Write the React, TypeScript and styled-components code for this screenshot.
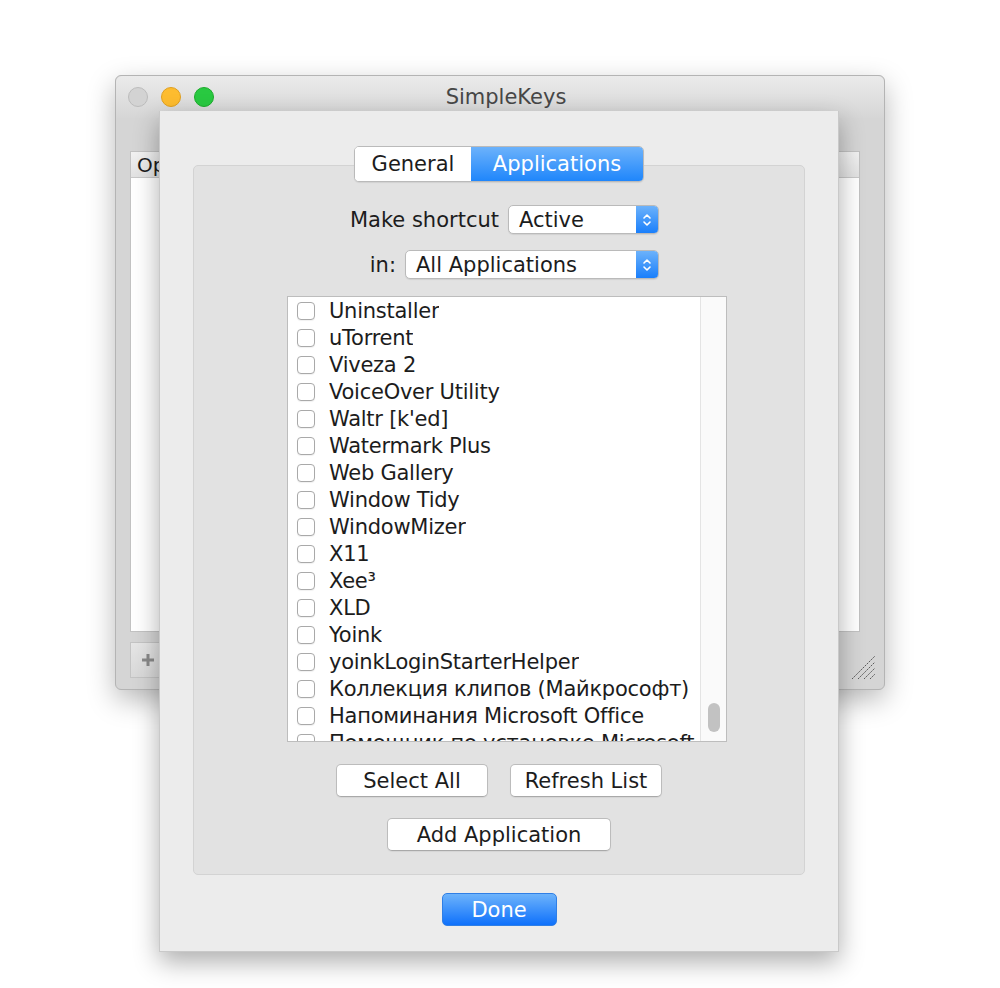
import styled, { createGlobalStyle } from "styled-components";

const GlobalStyle = createGlobalStyle`
  * { box-sizing: border-box; }
  html, body {
    margin: 0;
    background: #ffffff;
    font-family: "DejaVu Sans", "Liberation Sans", sans-serif;
    color: #1c1c1c;
  }
`;

const apps = [
  "Uninstaller",
  "uTorrent",
  "Viveza 2",
  "VoiceOver Utility",
  "Waltr [k'ed]",
  "Watermark Plus",
  "Web Gallery",
  "Window Tidy",
  "WindowMizer",
  "X11",
  "Xee³",
  "XLD",
  "Yoink",
  "yoinkLoginStarterHelper",
  "Коллекция клипов (Майкрософт)",
  "Напоминания Microsoft Office",
  "Помощник по установке Microsoft Office",
];

const Desktop = styled.div`
  height: 988px;
  padding: 75px 0 0 115px;
`;

const Window = styled.div`
  position: relative;
  width: 770px;
  height: 615px;
  background: #d5d5d5;
  border: 1px solid #b4b4b4;
  border-radius: 6px;
  box-shadow: 0 10px 28px rgba(0, 0, 0, 0.28);
`;

const TitleBar = styled.div`
  height: 42px;
  display: grid;
  grid-template-columns: 1fr auto 1fr;
  align-items: center;
  padding-left: 12px;
  border-radius: 6px 6px 0 0;
  background: linear-gradient(#ebebeb, #d6d6d6);
`;

const Lights = styled.div`
  display: flex;
  gap: 13px;
`;

const Light = styled.span<{ $fill: string; $edge: string }>`
  width: 20px;
  height: 20px;
  border-radius: 50%;
  background: ${(p) => p.$fill};
  border: 1px solid ${(p) => p.$edge};
`;

const Title = styled.div`
  font-size: 21px;
  color: #474747;
`;

const WindowBody = styled.div`
  padding: 33px 24px 0 14px;
`;

const Table = styled.div`
  height: 481px;
  background: #ffffff;
  border: 1px solid #c2c2c2;
`;

const TableHead = styled.div`
  height: 26px;
  padding-left: 6px;
  display: flex;
  align-items: center;
  font-size: 20px;
  background: linear-gradient(#f2f2f2, #e2e2e2);
  border-bottom: 1px solid #c8c8c8;
`;

const WindowFooter = styled.div`
  display: flex;
  justify-content: space-between;
  align-items: flex-end;
  padding-top: 10px;
`;

const PlusButton = styled.div`
  width: 35px;
  height: 36px;
  display: flex;
  align-items: center;
  justify-content: center;
  background: linear-gradient(#e6e6e6, #d9d9d9);
  border: 1px solid #c4c4c4;
`;

const Grip = styled.svg`
  margin: 0 -16px -2px 0;
`;

const Sheet = styled.div`
  position: absolute;
  left: 43px;
  top: 35px;
  width: 680px;
  height: 841px;
  display: flex;
  flex-direction: column;
  padding: 35px 33px 0;
  background: #ececec;
  border: 1px solid #c9c9c9;
  border-top: none;
  box-shadow: 0 10px 24px rgba(0, 0, 0, 0.32);
`;

const Segmented = styled.div`
  position: relative;
  z-index: 1;
  align-self: center;
  display: flex;
  height: 36px;
  margin-bottom: -17px;
  border: 1px solid #bababa;
  border-radius: 5px;
  overflow: hidden;
  background: #ffffff;
  box-shadow: 0 1px 1px rgba(0, 0, 0, 0.08);
`;

const Segment = styled.div<{ $width: number; $active?: boolean }>`
  width: ${(p) => p.$width}px;
  display: flex;
  align-items: center;
  justify-content: center;
  font-size: 21px;
  color: ${(p) => (p.$active ? "#ffffff" : "#1c1c1c")};
  background: ${(p) =>
    p.$active ? "linear-gradient(#6cb2fb, #1f86fb)" : "#ffffff"};
`;

const TabBox = styled.div`
  height: 710px;
  display: flex;
  flex-direction: column;
  padding-top: 39px;
  background: #e2e2e2;
  border: 1px solid #d3d3d3;
  border-radius: 5px;
`;

const Form = styled.div`
  display: flex;
  flex-direction: column;
  align-items: flex-end;
  gap: 16px;
  padding-right: 145px;
`;

const FieldRow = styled.div`
  display: flex;
  align-items: center;
  gap: 9px;
`;

const Label = styled.span`
  font-size: 21px;
`;

const Popup = styled.div<{ $width: number }>`
  width: ${(p) => p.$width}px;
  height: 29px;
  display: flex;
  border: 1px solid #bababa;
  border-radius: 5px;
  overflow: hidden;
  background: #ffffff;
  box-shadow: 0 1px 1px rgba(0, 0, 0, 0.08);
`;

const PopupValue = styled.span`
  flex: 1;
  display: flex;
  align-items: center;
  padding-left: 10px;
  font-size: 21px;
`;

const PopupCap = styled.span`
  width: 22px;
  display: flex;
  align-items: center;
  justify-content: center;
  background: linear-gradient(#6cb2fb, #1a7ffb);
`;

const List = styled.div`
  display: flex;
  width: 440px;
  height: 446px;
  margin: 17px 0 0 93px;
  background: #ffffff;
  border: 1px solid #bdbdbd;
`;

const Rows = styled.div`
  flex: 1;
  overflow: hidden;
  padding: 0 3px 0 9px;
`;

const Row = styled.div`
  height: 27px;
  display: flex;
  align-items: center;
  gap: 14px;
`;

const Check = styled.span`
  flex: none;
  width: 18px;
  height: 18px;
  border: 1px solid #a9a9a9;
  border-radius: 4px;
  background: #ffffff;
  box-shadow: 0 1px 1px rgba(0, 0, 0, 0.06);
`;

const RowText = styled.span`
  font-size: 21px;
  letter-spacing: -0.25px;
  white-space: nowrap;
  overflow: hidden;
`;

const Track = styled.div`
  width: 26px;
  display: flex;
  flex-direction: column;
  justify-content: flex-end;
  align-items: center;
  padding-bottom: 9px;
  background: #fafafa;
  border-left: 1px solid #e4e4e4;
`;

const Thumb = styled.div`
  width: 12px;
  height: 29px;
  border-radius: 6px;
  background: #c2c2c2;
`;

const ButtonRow = styled.div<{ $top: number }>`
  display: flex;
  justify-content: center;
  gap: 22px;
  margin-top: ${(p) => p.$top}px;
`;

const PushButton = styled.div<{ $width: number }>`
  width: ${(p) => p.$width}px;
  height: 33px;
  display: flex;
  align-items: center;
  justify-content: center;
  font-size: 21px;
  background: #ffffff;
  border: 1px solid #bcbcbc;
  border-bottom-color: #a9a9a9;
  border-radius: 5px;
  box-shadow: 0 1px 1px rgba(0, 0, 0, 0.06);
`;

const DoneButton = styled.div`
  align-self: center;
  width: 115px;
  height: 33px;
  margin-top: 18px;
  display: flex;
  align-items: center;
  justify-content: center;
  font-size: 21px;
  color: #ffffff;
  background: linear-gradient(#6db3fb, #0f71fb);
  border: 1px solid #2f7fe6;
  border-radius: 5px;
`;

function Chevrons() {
  return (
    <svg width="10" height="16" viewBox="0 0 10 16">
      <path
        d="M2 6 L5 3 L8 6 M2 10 L5 13 L8 10"
        fill="none"
        stroke="#ffffff"
        strokeWidth="1.6"
        strokeLinecap="round"
        strokeLinejoin="round"
      />
    </svg>
  );
}

export default function App() {
  return (
    <>
      <GlobalStyle />
      <Desktop>
        <Window>
          <TitleBar>
            <Lights>
              <Light $fill="#d3d3d3" $edge="#bcbcbc" />
              <Light $fill="#fdbc2f" $edge="#e0a020" />
              <Light $fill="#29c941" $edge="#1cac2b" />
            </Lights>
            <Title>SimpleKeys</Title>
          </TitleBar>
          <WindowBody>
            <Table>
              <TableHead>Options</TableHead>
            </Table>
            <WindowFooter>
              <PlusButton>
                <svg width="16" height="16" viewBox="0 0 16 16">
                  <path d="M8 2 V14 M2 8 H14" stroke="#8a8a8a" strokeWidth="3" />
                </svg>
              </PlusButton>
              <Grip width="28" height="26" viewBox="0 0 28 26">
                {[0, 6, 12, 18].map((o) => (
                  <path
                    key={o}
                    d={`M${4 + o} 25 L${27} ${2 + o}`}
                    stroke="#5a5a5a"
                    strokeWidth="1"
                    strokeDasharray="2 1"
                  />
                ))}
              </Grip>
            </WindowFooter>
          </WindowBody>

          <Sheet>
            <Segmented>
              <Segment $width={116}>General</Segment>
              <Segment $width={172} $active>
                Applications
              </Segment>
            </Segmented>
            <TabBox>
              <Form>
                <FieldRow>
                  <Label>Make shortcut</Label>
                  <Popup $width={151}>
                    <PopupValue>Active</PopupValue>
                    <PopupCap>
                      <Chevrons />
                    </PopupCap>
                  </Popup>
                </FieldRow>
                <FieldRow>
                  <Label>in:</Label>
                  <Popup $width={254}>
                    <PopupValue>All Applications</PopupValue>
                    <PopupCap>
                      <Chevrons />
                    </PopupCap>
                  </Popup>
                </FieldRow>
              </Form>
              <List>
                <Rows>
                  {apps.map((name) => (
                    <Row key={name}>
                      <Check />
                      <RowText>{name}</RowText>
                    </Row>
                  ))}
                </Rows>
                <Track>
                  <Thumb />
                </Track>
              </List>
              <ButtonRow $top={22}>
                <PushButton $width={152}>Select All</PushButton>
                <PushButton $width={152}>Refresh List</PushButton>
              </ButtonRow>
              <ButtonRow $top={21}>
                <PushButton $width={224}>Add Application</PushButton>
              </ButtonRow>
            </TabBox>
            <DoneButton>Done</DoneButton>
          </Sheet>
        </Window>
      </Desktop>
    </>
  );
}
